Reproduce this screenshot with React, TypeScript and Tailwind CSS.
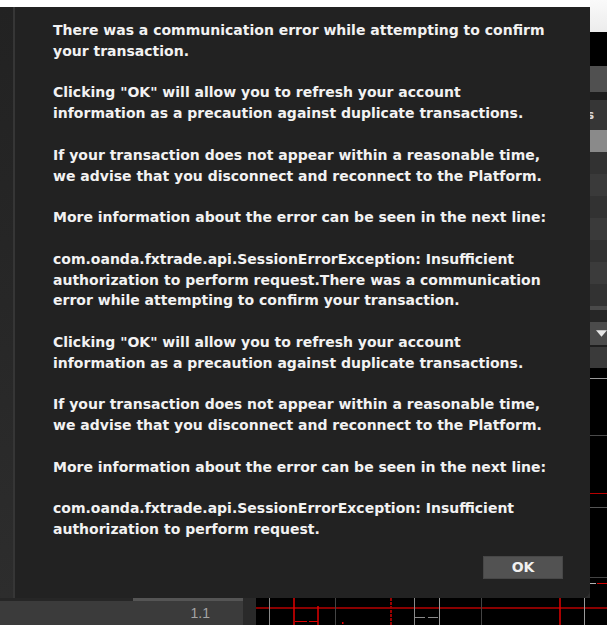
import type { ReactNode } from "react";

const paragraphs: ReactNode[] = [
  "There was a communication error while attempting to confirm your transaction.",
  'Clicking "OK" will allow you to refresh your account information as a precaution against duplicate transactions.',
  "If your transaction does not appear within a reasonable time, we advise that you disconnect and reconnect to the Platform.",
  "More information about the error can be seen in the next line:",
  "com.oanda.fxtrade.api.SessionErrorException: Insufficient authorization to perform request.There was a communication error while attempting to confirm your transaction.",
  'Clicking "OK" will allow you to refresh your account information as a precaution against duplicate transactions.',
  "If your transaction does not appear within a reasonable time, we advise that you disconnect and reconnect to the Platform.",
  "More information about the error can be seen in the next line:",
  "com.oanda.fxtrade.api.SessionErrorException: Insufficient authorization to perform request.",
];

// rows of the order ticket peeking out to the right of the dialog
function SideStrip() {
  return (
    <div className="flex w-[17px] flex-col overflow-hidden">
      <div className="h-[32px] bg-gradient-to-b from-[#fafafa] to-[#ececec]" />
      <div className="h-[34px] bg-black" />
      <div className="h-[26px] bg-[#505050]" />
      <div className="h-[8px] bg-[#1e1e1e]" />
      <div className="flex h-[30px] items-center bg-[#363636]">
        <span className="-ml-[3px] text-[12px] font-bold leading-none text-[#d8d8d8]">s</span>
      </div>
      <div className="h-[22px] bg-[#8a8a8a]" />
      <div className="h-[22px] bg-[#323232]" />
      <div className="h-[22px] bg-[#3a3a3a]" />
      <div className="h-[22px] bg-[#323232]" />
      <div className="h-[22px] bg-[#3a3a3a]" />
      <div className="h-[22px] bg-[#323232]" />
      <div className="h-[22px] bg-[#3b3b3b]" />
      <div className="h-[22px] bg-[#323232]" />
      <div className="h-[4px] bg-[#4a4a4a]" />
      <div className="h-[12px] bg-[#262626]" />
      <div className="flex h-[23px] items-center bg-[#4b4b4b] pl-[6px]">
        <svg width="12" height="7" viewBox="0 0 12 7">
          <path d="M0 0h12L6 7z" fill="#e6e6e6" />
        </svg>
      </div>
      <div className="h-[2px] bg-[#1e1e1e]" />
      <div className="h-[21px] bg-[#3a3a3a]" />
      <div className="flex-1 bg-black">
        <svg width="17" height="230" viewBox="0 0 17 230">
          <line x1="0" y1="10.5" x2="17" y2="10.5" stroke="#9a9a9a" />
          <line x1="0" y1="67.5" x2="17" y2="67.5" stroke="#4a4a4a" />
          <line x1="0" y1="125.5" x2="17" y2="125.5" stroke="#b80000" />
          <line x1="0" y1="139.5" x2="17" y2="139.5" stroke="#555" />
          <line x1="0" y1="209.5" x2="17" y2="209.5" stroke="#444" />
          <line x1="0" y1="215.5" x2="6" y2="215.5" stroke="#b0b0b0" />
          <line x1="7" y1="215.5" x2="17" y2="215.5" stroke="#d00000" />
        </svg>
      </div>
    </div>
  );
}

function BottomChart() {
  return (
    <div className="flex-1 bg-black">
      <svg width="351" height="27" viewBox="0 0 351 27">
        <line x1="0" y1="10" x2="351" y2="10" stroke="#b80000" strokeWidth="1.5" />
        <line x1="13.5" y1="0" x2="13.5" y2="27" stroke="#8a8a8a" />
        <line x1="38" y1="0" x2="38" y2="27" stroke="#e00000" strokeWidth="1.5" />
        <line x1="39" y1="23.5" x2="51" y2="23.5" stroke="#e00000" />
        <line x1="53" y1="23.5" x2="62" y2="23.5" stroke="#e00000" />
        <line x1="62" y1="8" x2="62" y2="27" stroke="#e00000" strokeWidth="1.5" />
        <line x1="79.5" y1="0" x2="79.5" y2="27" stroke="#444" />
        <rect x="86" y="24" width="1.5" height="2" fill="#e00000" />
        <line x1="135" y1="0" x2="135" y2="27" stroke="#9a0000" strokeWidth="2" strokeDasharray="3 1" />
        <line x1="158.5" y1="0" x2="158.5" y2="27" stroke="#8a8a8a" />
        <line x1="159" y1="19.5" x2="169" y2="19.5" stroke="#8a8a8a" />
        <line x1="172" y1="19.5" x2="182" y2="19.5" stroke="#8a8a8a" />
        <line x1="183.5" y1="0" x2="183.5" y2="27" stroke="#9a9a9a" />
        <line x1="225.5" y1="0" x2="225.5" y2="27" stroke="#444" />
        <line x1="304" y1="0" x2="304" y2="27" stroke="#e00000" strokeWidth="1.5" />
        <line x1="328.5" y1="0" x2="328.5" y2="27" stroke="#9a9a9a" />
      </svg>
    </div>
  );
}

export default function App() {
  return (
    <div className="relative h-[625px] w-[607px] overflow-hidden bg-black font-['DejaVu_Sans',sans-serif]">
      <div className="flex h-[598px]">
        <div className="flex w-[590px] flex-col">
          <div className="h-[7px] bg-white" />
          <div className="flex-1 bg-gradient-to-b from-[#222222] via-[#272727] to-[#2d2d2d]" />
        </div>
        <SideStrip />
      </div>

      <div className="flex h-[27px]">
        <div className="flex w-[243px] flex-col bg-[#3b3b3b]">
          <div className="flex h-[3px]">
            <div className="w-[133px] bg-[#262626]" />
            <div className="flex-1 bg-[#555555]" />
          </div>
          <div className="flex flex-1 items-center justify-end pr-[33px] font-['Liberation_Sans',sans-serif] text-[14px] text-[#a4a4a4]">
            1.1
          </div>
        </div>
        <div className="w-[13px] bg-[#2a2a2a]" />
        <BottomChart />
      </div>

      <div
        role="dialog"
        className="absolute left-[13px] top-[7px] flex h-[591px] w-[577px] flex-col rounded-br-[8px] border-l-2 border-[#363636] bg-[#222222] pb-[19px] pl-[38px] pr-[27px] pt-[13px]"
      >
        <div className="w-[496px] space-y-[20.8px] text-[14px] font-bold leading-[20.8px] text-[#f2f2f2]">
          {paragraphs.map((p, i) => (
            <p key={i}>{p}</p>
          ))}
        </div>
        <div className="flex-1" />
        <div className="flex justify-end">
          <button className="h-[23px] w-[80px] border border-[#474747] bg-[#525252] text-[14px] font-bold text-[#f0f0f0]">
            OK
          </button>
        </div>
      </div>
    </div>
  );
}
